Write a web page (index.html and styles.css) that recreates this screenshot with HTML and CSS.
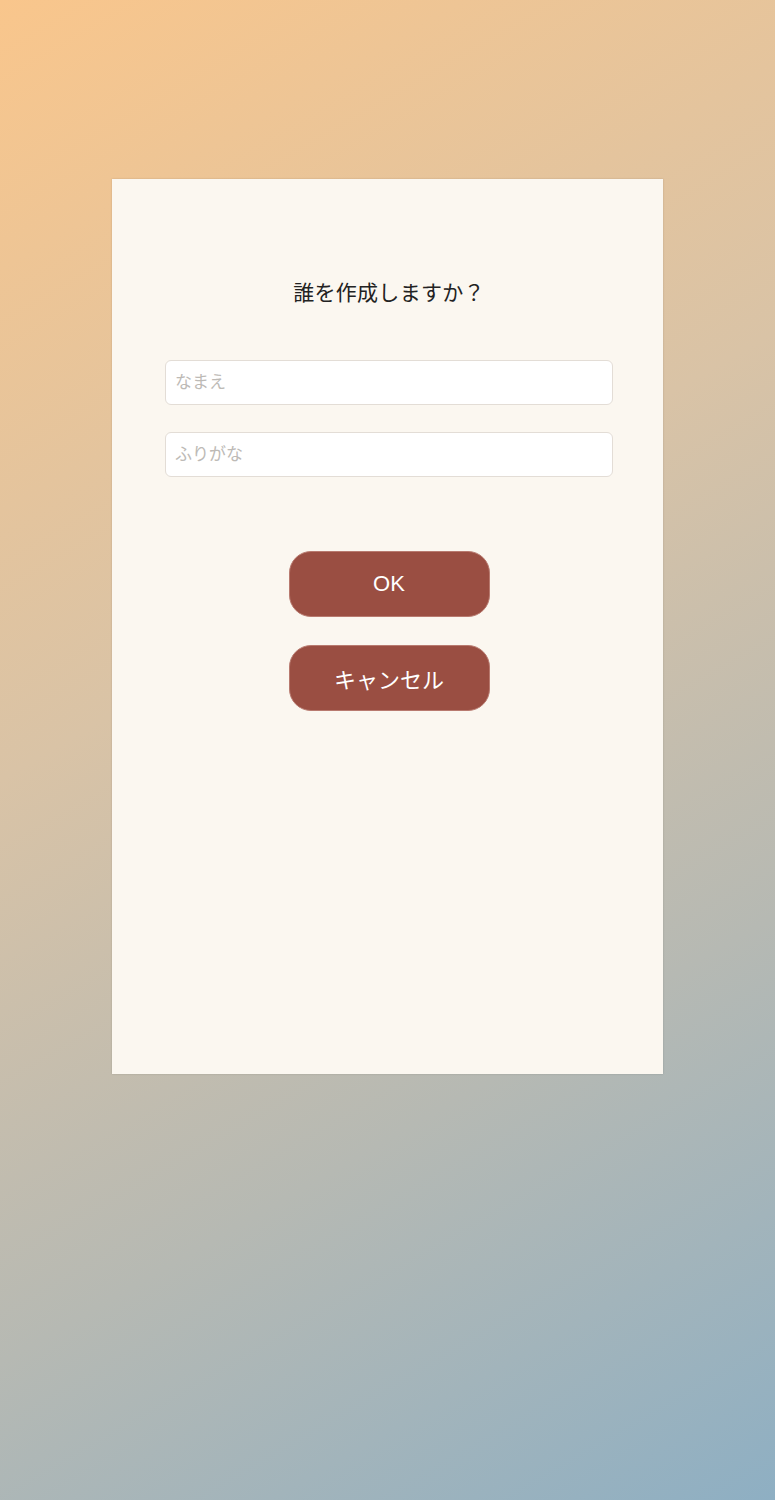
FILE: index.html
```html
<!DOCTYPE html>
<html lang="ja">
<head>
<meta charset="utf-8">
<title>作成</title>
<link rel="stylesheet" href="styles.css">
</head>
<body>
<main class="page">
  <section class="card">
    <h1 class="title">誰を作成しますか？</h1>
    <div class="fields">
      <input class="field" type="text" placeholder="なまえ">
      <input class="field" type="text" placeholder="ふりがな">
    </div>
    <div class="actions">
      <button class="btn" type="button">OK</button>
      <button class="btn" type="button">キャンセル</button>
    </div>
  </section>
</main>
</body>
</html>
```
FILE: styles.css
```css
html, body {
  margin: 0;
  padding: 0;
}
body {
  min-height: 1500px;
  background: linear-gradient(150deg, #f9c68c 0%, #d9c3a6 40%, #b6b9b3 70%, #8eafc3 100%);
  font-family: "Liberation Sans", "Noto Sans CJK JP", sans-serif;
}
.page {
  display: flex;
  justify-content: center;
  padding-top: 179px;
}
.card {
  width: 551px;
  height: 895px;
  box-sizing: border-box;
  background: #fbf7f0;
  box-shadow: 0 0 2px rgba(0, 0, 0, 0.15);
  padding: 100px 50px 0 53px;
  display: flex;
  flex-direction: column;
}
.title {
  margin: 0;
  text-align: center;
  font-weight: normal;
  font-size: 21px;
  letter-spacing: 0.3px;
  line-height: 28px;
  color: #222;
}
.fields {
  display: flex;
  flex-direction: column;
  gap: 27px;
  margin-top: 53px;
}
.field {
  width: 448px;
  height: 45px;
  box-sizing: border-box;
  border: 1px solid #e3ddd6;
  border-radius: 6px;
  background: #fff;
  padding: 0 9px;
  font-family: "Liberation Sans", "Noto Sans CJK JP", sans-serif;
  font-size: 17px;
  color: #333;
  outline: none;
}
.field::placeholder {
  color: #bdbab6;
}
.actions {
  display: flex;
  flex-direction: column;
  align-items: center;
  gap: 28px;
  margin-top: 74px;
}
.btn {
  width: 201px;
  height: 66px;
  border: 1px solid #b87a6f;
  border-radius: 22px;
  background: #9a4e42;
  color: #fff;
  font-family: "Liberation Sans", "Noto Sans CJK JP", sans-serif;
  font-size: 22px;
  cursor: pointer;
}
```
